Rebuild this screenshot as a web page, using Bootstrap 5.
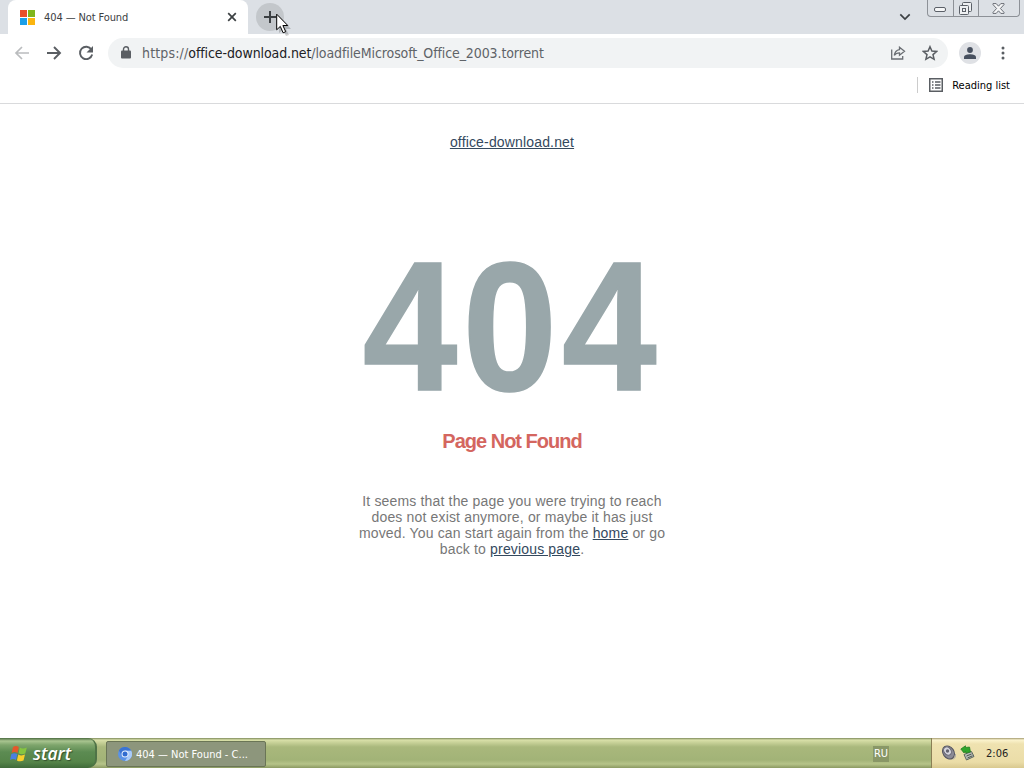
<!DOCTYPE html>
<html lang="en">

<head>
    <meta charset="UTF-8" />
    <meta name="viewport" content="width=device-width, initial-scale=1.0" />
    <title>404 — Not Found</title>
    <link href="https://cdn.jsdelivr.net/npm/bootstrap@5.3.3/dist/css/bootstrap.min.css" rel="stylesheet">
    <style>
        body {
            font-family: "DejaVu Sans Condensed", "DejaVu Sans", sans-serif;
            font-stretch: condensed;
            font-size: 11px;
            line-height: 14px;
            color: #222;
        }

        svg {
            display: block;
            flex: none;
        }

        /* Browser chrome */
        .tab-strip {
            height: 34px;
            background: #dce0e5;
        }

        .browser-tab {
            width: 240px;
            margin-left: 8px;
            padding: 0 11px 0 12px;
            background: #fff;
            border-radius: 8px 8px 0 0;
        }

        .tab-title {
            margin-left: 9px;
            padding-top: 1px;
            color: #3c4043;
            letter-spacing: -.1px;
        }

        .new-tab {
            width: 28px;
            height: 28px;
            margin: 3px 0 0 8px;
            background: #c3c7cb;
        }

        .pointer {
            left: 276px;
            top: 13px;
            z-index: 5;
        }

        .tab-search {
            margin: 13px 0 0 auto;
        }

        .window-buttons {
            width: 93px;
            height: 17px;
            margin: 0 4px 0 16px;
            border: 1px solid #8d9197;
            border-top: 0;
            border-radius: 0 0 4px 4px;
        }

        .window-buttons > div {
            width: 25px;
            padding-right: 2px;
        }

        .window-buttons > div + div {
            border-left: 1px solid #8d9197;
        }

        .toolbar-row {
            height: 37px;
            padding-left: 14px;
        }

        .toolbar-gap {
            margin-left: 16px;
        }

        .address-bar {
            width: 840px;
            height: 30px;
            padding: 0 10px 0 13px;
            margin-left: 14px;
            background: #f1f3f4;
            font-size: 14px;
        }

        .address {
            margin-left: 11px;
            color: #5f6368;
            white-space: nowrap;
            letter-spacing: -.1px;
        }

        .address span {
            color: #202124;
        }

        .address .scheme {
            color: #5f6368;
            letter-spacing: .15px;
        }

        .avatar {
            width: 22px;
            height: 22px;
            margin-left: 11px;
            background: #dfe1e5;
        }

        .bookmark-row {
            height: 33px;
            padding: 0 14px 4px 0;
            border-bottom: 1px solid #d9dadc;
            color: #000;
        }

        .bookmark-divider {
            width: 1px;
            height: 16px;
            margin-right: 11px;
            background: #ccc;
        }

        .bookmark-label {
            margin-left: 9px;
            padding-top: 1px;
        }

        /* Error page */
        .error-page {
            padding-top: 30px;
            font-family: "Liberation Sans", Arial, sans-serif;
            font-size: 14px;
            line-height: 16px;
            letter-spacing: .16px;
            color: #777;
        }

        .error-page a {
            color: #34495e;
        }

        .error-code {
            margin-top: 86px;
            font-size: 179px;
            line-height: 180px;
            font-weight: 700;
            letter-spacing: 5.3px;
            color: #99a7aa;
            -webkit-text-stroke: 1.5px #99a7aa;
            transform: scale(.95, 1.025);
        }

        .error-title {
            margin: 13px 0 0;
            font-size: 20px;
            line-height: 24px;
            font-weight: 700;
            letter-spacing: -1px;
            color: #d4665f;
        }

        .error-text {
            width: 312px;
            margin: 40px 0 0;
        }

        /* Taskbar */
        .taskbar {
            height: 30px;
            background: linear-gradient(#7d8a5c 0, #d9e0a9 2px, #cbd49b 4px, #a9b87c 9px, #a2b377 22px, #b6c489 26px, #8b9a62 30px);
            color: #fff;
        }

        .start-button {
            width: 97px;
            padding-left: 10px;
            border-radius: 0 9px 9px 0;
            border-right: 2px solid #4f7347;
            background: linear-gradient(#4b6b40 0, #a9c590 3px, #7ea56c 7px, #5c8b52 14px, #558449 24px, #3f6a39 30px);
        }

        .start-label {
            margin-left: 5px;
            font-family: "Open Sans", sans-serif;
            font-stretch: normal;
            font-size: 17.5px;
            font-weight: 600;
            font-style: italic;
            text-shadow: 1px 1px 1px #33502d;
        }

        .task-button {
            width: 160px;
            height: 26px;
            margin: 3px 0 0 9px;
            padding-left: 11px;
            background: #8d967c;
            border: 1px solid #6a7556;
            border-radius: 2px;
        }

        .task-label {
            margin-left: 4px;
            padding-top: 1px;
        }

        .language {
            margin: 1px 42px 0 0;
            padding: 1px;
            background: #899767;
        }

        .tray {
            width: 93px;
            padding-left: 9px;
            border-left: 1px solid #8a7f55;
            background: linear-gradient(#a39a70 0, #fbf3cd 2px, #efe2b0 6px, #ebdda8 24px, #d9c98f 30px);
            color: #222;
        }

        .clock {
            margin-left: 11px;
            padding-top: 2px;
        }
    </style>
</head>

<body class="vh-100 overflow-hidden d-flex flex-column bg-white">

    <!-- Tabs and window buttons -->
    <div class="tab-strip d-flex flex-shrink-0">
        <div class="browser-tab d-flex align-items-center">
            <svg width="15" height="15" viewBox="0 0 15 15">
                <path fill="#e8502c" d="M0 0h7v7H0z" />
                <path fill="#7fb51c" d="M8 0h7v7H8z" />
                <path fill="#1b9fe8" d="M0 8h7v7H0z" />
                <path fill="#fbb510" d="M8 8h7v7H8z" />
            </svg>
            <div class="tab-title">404 — Not Found</div>
            <svg class="ms-auto" width="10" height="10" viewBox="0 0 10 10" stroke="#3c4043" stroke-width="1.7">
                <path d="M1.2 1.2l7.6 7.6M8.8 1.2L1.2 8.8" />
            </svg>
        </div>
        <div class="new-tab rounded-circle d-flex align-items-center justify-content-center">
            <svg width="12" height="12" viewBox="0 0 12 12" stroke="#3c4043" stroke-width="2">
                <path d="M6 0v12M0 6h12" />
            </svg>
        </div>
        <svg class="pointer position-absolute" width="15" height="24" viewBox="0 0 15 24">
            <path fill="#00000030" d="M3 3v17l4-3 3 6 3-1-3-6h5z" />
            <path fill="#fff" stroke="#000" d="M.7 1.2v15.6l3.6-3.4 2.8 6.4 2.6-1.1-2.8-6.2h4.9z" />
        </svg>
        <svg class="tab-search" width="12" height="8" viewBox="0 0 12 8" fill="none" stroke="#3c4043" stroke-width="1.7">
            <path d="M1.3 1.3L6 6l4.7-4.7" />
        </svg>
        <div class="window-buttons d-flex">
            <div class="d-flex align-items-end justify-content-center pb-1">
                <svg width="12" height="5" viewBox="0 0 12 5" fill="#f5f6f7" stroke="#5b6068">
                    <rect x=".5" y=".5" width="11" height="4" rx="1.5" />
                </svg>
            </div>
            <div class="d-flex align-items-center justify-content-center">
                <svg width="13" height="13" viewBox="0 0 13 13" fill="#eef0f2" stroke="#5b6068">
                    <rect x="3.5" y=".5" width="9" height="9" rx="1" />
                    <rect x=".5" y="3.5" width="9" height="9" rx="1" />
                    <rect x="3.5" y="6.5" width="3" height="3" />
                </svg>
            </div>
            <div class="flex-grow-1 d-flex align-items-center justify-content-center">
                <svg width="13" height="11" viewBox="0 0 13 11" fill="#f5f6f7" stroke="#5b6068" stroke-width=".9">
                    <path d="M1 .6h3.2l2.3 2.6L8.8.6H12v1L8.4 5.5 12 9.4v1H8.8L6.5 7.8l-2.3 2.6H1v-1l3.6-3.9L1 1.6z" />
                </svg>
            </div>
        </div>
    </div>

    <!-- Toolbar -->
    <div class="toolbar-row d-flex align-items-center flex-shrink-0">
        <svg width="16" height="14" viewBox="0 0 16 14" fill="none" stroke="#babcbe" stroke-width="1.7">
            <path d="M15 7H2M8 1L2 7l6 6" />
        </svg>
        <svg class="toolbar-gap" width="16" height="14" viewBox="0 0 16 14" fill="none" stroke="#5a5e63" stroke-width="1.9">
            <path d="M1 7h13M8 1l6 6-6 6" />
        </svg>
        <svg class="toolbar-gap" width="16" height="16" viewBox="0 0 16 16" fill="none" stroke="#5a5e63" stroke-width="1.9">
            <path d="M13.4 4.5A6.200 6.200 0 1 0 14.200 9.500" />
            <path fill="#5a5e63" stroke="none" d="M15 1v6.500H8.500z" />
        </svg>
        <div class="address-bar rounded-pill d-flex align-items-center">
            <svg width="10" height="13" viewBox="0 0 10 13">
                <path fill="none" stroke="#5a5e63" stroke-width="1.4" d="M2.500 6V3.300a2.500 2.500 0 0 1 5 0V6" />
                <rect y="4.500" width="10" height="8" rx="1" fill="#5a5e63" />
            </svg>
            <div class="address"><span class="scheme">https://</span><span>office-download.net</span>/loadfileMicrosoft_Office_2003.torrent</div>
            <svg class="ms-auto" width="16" height="14" viewBox="0 0 16 14" fill="none" stroke="#6a6e73" stroke-width="1.300">
                <path d="M1.700 3.500v9.500h11v-3" />
                <path d="M9.500 1.200l5 4-5 4V6.800c-2.500 0-4 .8-5.200 2.600.4-3.300 2.200-5.300 5.200-5.800z" />
            </svg>
            <svg class="toolbar-gap" width="16" height="16" viewBox="0 0 16 16" fill="none" stroke="#5a5e63" stroke-width="1.500">
                <path d="M8 1.700l1.900 4.400 4.700.4-3.600 3.100 1.100 4.700L8 11.800l-4.100 2.500L5 9.600 1.400 6.500l4.700-.4z" />
            </svg>
        </div>
        <div class="avatar rounded-circle d-flex align-items-center justify-content-center">
            <svg width="12" height="12" viewBox="0 0 12 12" fill="#47505f">
                <circle cx="6" cy="3" r="2.900" />
                <path d="M0 12v-1.800C0 8 3.500 7.200 6 7.200s6 .8 6 3V12z" />
            </svg>
        </div>
        <svg class="ms-3 ps-1" width="8" height="14" viewBox="0 0 4 14" fill="#5a5e63">
            <circle cx="2" cy="2" r="1.500" />
            <circle cx="2" cy="7" r="1.500" />
            <circle cx="2" cy="12" r="1.500" />
        </svg>
    </div>

    <!-- Bookmarks bar -->
    <div class="bookmark-row d-flex align-items-center justify-content-end flex-shrink-0">
        <div class="bookmark-divider"></div>
        <svg width="14" height="14" viewBox="0 0 14 14" fill="none" stroke="#5a5e63" stroke-width="1.500">
            <rect x=".75" y=".75" width="12.500" height="12.500" />
            <path stroke-width="1.400" d="M3 4h1.500M6 4h5.500M3 7h1.500M6 7h5.500M3 10h1.500M6 10h5.500" />
        </svg>
        <div class="bookmark-label">Reading list</div>
    </div>

    <!-- Error page -->
    <div class="error-page flex-grow-1 d-flex flex-column align-items-center text-center">
        <a href="#">office-download.net</a>
        <div class="error-code">404</div>
        <h1 class="error-title">Page Not Found</h1>
        <p class="error-text">It seems that the page you were trying to reach does not exist anymore, or maybe it has just moved. You can start again from the <a href="#">home</a> or go back to <a href="#">previous page</a>.</p>
    </div>

    <!-- Taskbar -->
    <div class="taskbar d-flex flex-shrink-0">
        <div class="start-button d-flex align-items-center">
            <svg width="18" height="17" viewBox="0 0 18 17">
                <path fill="#e4582b" d="M3 2C5 .6 7 .8 8.800 2L7.500 8C5.500 6.800 3.500 6.800 1.600 8z" />
                <path fill="#86c540" d="M9.800 2.500c2 1.200 4.200 1.200 7 0l-1.500 6c-2.500 1.200-4.800 1-6.800-.2z" />
                <path fill="#4a7fe0" d="M1.400 9c2-1.200 4-1.100 5.900 0L6 15c-2-1.200-4-1.200-6 0z" />
                <path fill="#f8cf2c" d="M8.300 9.500c2 1.200 4.200 1.200 6.700.1l-1.500 6c-2.300 1.100-4.600 1-6.600-.2z" />
            </svg>
            <div class="start-label">start</div>
        </div>
        <div class="task-button d-flex align-items-center">
            <svg width="14" height="14" viewBox="0 0 14 14">
                <circle cx="7" cy="7" r="7" fill="#5b93e6" />
                <path fill="#a9cbfa" d="M7 3.500h6.100A7 7 0 0 1 7 14l3.200-5.200z" />
                <path fill="#3a73d2" d="M1 3.400A7 7 0 0 1 13.100 3.500H7L3.900 8.700z" />
                <circle cx="7" cy="7" r="3.500" fill="#e8f1fd" />
                <circle cx="7" cy="7" r="2.500" fill="#2f6bd0" />
            </svg>
            <div class="task-label">404 — Not Found - C...</div>
        </div>
        <div class="language ms-auto align-self-center">RU</div>
        <div class="tray d-flex align-items-center">
            <svg width="16" height="16" viewBox="0 0 16 16">
                <ellipse cx="7.500" cy="7.500" rx="5.500" ry="7" fill="#8b8b96" stroke="#55555f" transform="rotate(-35 7.500 7.500)" />
                <ellipse cx="6.500" cy="6" rx="3.500" ry="4.500" fill="#d4d4dd" stroke="#666672" transform="rotate(-35 6.500 6)" />
                <circle cx="6.500" cy="6" r="1.700" fill="#62626e" />
                <path fill="none" stroke="#a6a6a6" d="M12 14.500q3-2 2.500-5.500" />
            </svg>
            <svg style="margin-left: 3px" width="15" height="16" viewBox="0 0 15 16">
                <path fill="#b9beb9" stroke="#5d665f" d="M4 9.500l7.500-3 2.500 5-7.500 3.500z" />
                <path stroke="#4c554d" d="M6.500 11l5-2M7.500 13l5-2.200" />
                <path fill="#2fa52b" stroke="#1c7a1c" stroke-width=".7" d="M.8 4L5.500.8v1.700l4-.5 1 5-4.800 1-.2-1.800L4 8z" />
            </svg>
            <div class="clock">2:06</div>
        </div>
    </div>

    <script src="https://cdn.jsdelivr.net/npm/bootstrap@5.3.3/dist/js/bootstrap.bundle.min.js"></script>
</body>

</html>
